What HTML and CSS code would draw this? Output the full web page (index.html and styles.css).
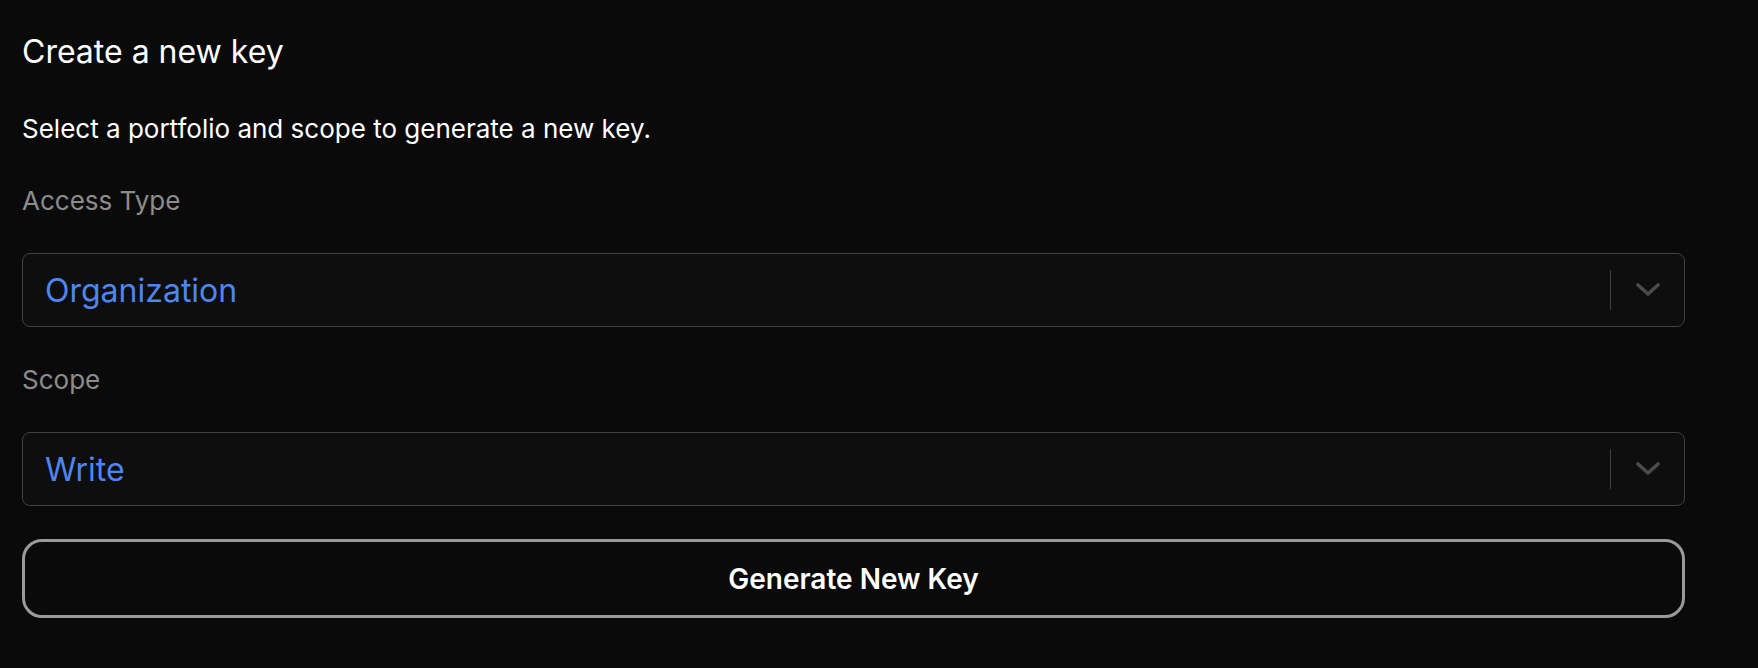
FILE: index.html
```html
<!DOCTYPE html>
<html lang="en">
<head>
<meta charset="utf-8">
<title>Create a new key</title>
<link rel="stylesheet" href="styles.css">
</head>
<body>
<main class="panel">
  <h1 class="title">Create a new key</h1>
  <p class="subtitle">Select a portfolio and scope to generate a new key.</p>
  <div class="field">
    <label class="label">Access Type</label>
    <div class="select">
      <span class="value">Organization</span>
      <span class="indicators">
        <span class="sep"></span>
        <svg class="chev" width="24" height="14" viewBox="0 0 24 14"><polyline points="2,2 12,11 22,2" fill="none" stroke="currentColor" stroke-width="3.6" stroke-linecap="round" stroke-linejoin="round"/></svg>
      </span>
    </div>
  </div>
  <div class="field">
    <label class="label">Scope</label>
    <div class="select">
      <span class="value">Write</span>
      <span class="indicators">
        <span class="sep"></span>
        <svg class="chev" width="24" height="14" viewBox="0 0 24 14"><polyline points="2,2 12,11 22,2" fill="none" stroke="currentColor" stroke-width="3.6" stroke-linecap="round" stroke-linejoin="round"/></svg>
      </span>
    </div>
  </div>
  <button class="btn">Generate New Key</button>
</main>
</body>
</html>
```
FILE: styles.css
```css
html, body {
  margin: 0;
  background: #0a0a0a;
}
body {
  font-family: Inter, "Noto Sans", sans-serif;
  color: #ffffff;
}
.panel {
  display: flex;
  flex-direction: column;
  padding: 34px 73px 40px 22px;
}
.title {
  margin: 0;
  font-size: 32px;
  font-weight: 400;
  line-height: 36px;
}
.subtitle {
  margin: 43px 0 0;
  font-size: 26px;
  line-height: 32px;
}
.field {
  display: flex;
  flex-direction: column;
  margin-top: 40px;
}
.field + .field {
  margin-top: 37px;
}
.label {
  font-size: 26px;
  line-height: 32px;
  color: #8c8c8c;
}
.select {
  margin-top: 36px;
  height: 74px;
  box-sizing: border-box;
  border: 1.5px solid #404046;
  border-radius: 8px;
  background: #0e0e0f;
  display: flex;
  align-items: center;
  padding: 0 24px 0 22px;
}
.value {
  flex: 1;
  font-size: 32px;
  color: #4f86ee;
}
.indicators {
  display: flex;
  align-items: center;
  gap: 25px;
}
.sep {
  width: 1.5px;
  height: 40px;
  background: #404046;
}
.chev {
  color: #4a4a50;
  display: block;
}
.btn {
  margin-top: 33px;
  height: 79px;
  border: 3px solid #9a9a9a;
  border-radius: 20px;
  background: #0a0a0a;
  color: #ffffff;
  font-family: Inter, "Noto Sans", sans-serif;
  font-size: 28px;
  font-weight: 600;
}
```
